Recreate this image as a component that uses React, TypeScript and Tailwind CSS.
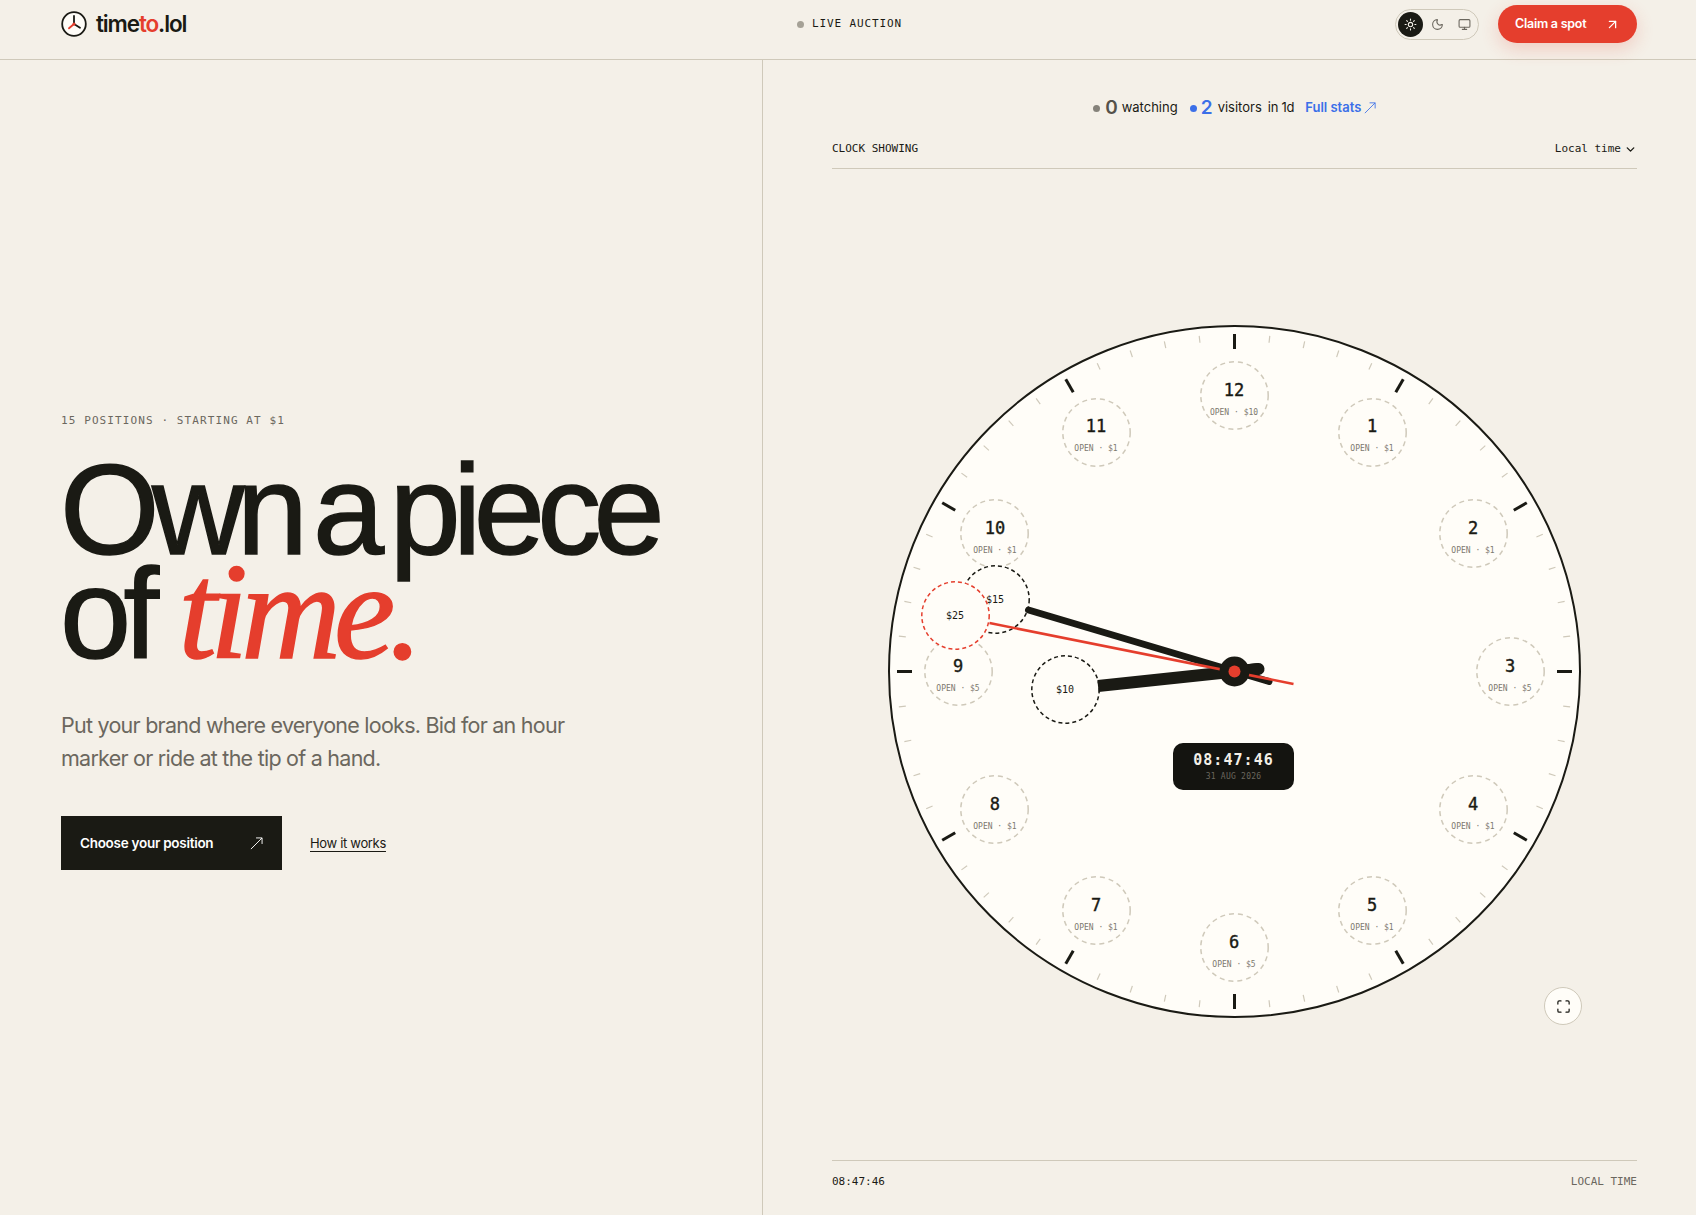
import { ArrowUpRight, ChevronDown, Maximize, Monitor, Moon, Sun } from "lucide-react";

const CENTER = 346.5;
const MONO = "font-['DejaVu_Sans_Mono',monospace]";

const hours = [
    { n: 12, price: "$10" },
    { n: 1, price: "$1" },
    { n: 2, price: "$1" },
    { n: 3, price: "$5" },
    { n: 4, price: "$1" },
    { n: 5, price: "$1" },
    { n: 6, price: "$5" },
    { n: 7, price: "$1" },
    { n: 8, price: "$1" },
    { n: 9, price: "$5" },
    { n: 10, price: "$1" },
    { n: 11, price: "$1" },
];

function polar(deg: number, r: number) {
    const a = ((deg - 90) * Math.PI) / 180;
    return { x: CENTER + r * Math.cos(a), y: CENTER + r * Math.sin(a) };
}

function LongArrow({ className }: { className?: string }) {
    return (
        <svg viewBox="0 0 14 14" fill="none" stroke="currentColor" strokeWidth="1" className={className}>
            <path d="M1 13 13 1M6.5 1H13V7.5" />
        </svg>
    );
}

function Logo() {
    return (
        <svg viewBox="0 0 26 26" className="w-[26px] h-[26px]">
            <circle cx="13" cy="13" r="11.8" fill="#fffdf8" stroke="#1a1a14" strokeWidth="1.8" />
            <path d="M13 13V5M13 13l6 3.8" stroke="#1a1a14" strokeWidth="1.8" strokeLinecap="round" />
            <path d="M13 13l-5 4.3" stroke="#e53e2d" strokeWidth="1.8" strokeLinecap="round" />
            <circle cx="13" cy="13" r="1.6" fill="#e53e2d" />
        </svg>
    );
}

function Header() {
    return (
        <header className="h-[60px] shrink-0 border-b border-[#cfc9ba] pl-[61px] pr-[59px] pb-[11px] flex items-center justify-between relative">
            <div className="flex items-center gap-[9px]">
                <Logo />
                <span className="font-['Inter',sans-serif] text-[22.5px] font-semibold tracking-[-0.05em] text-[#1a1a14]">
                    time<span className="text-[#e53e2d]">to</span>.lol
                </span>
            </div>
            <div className={`absolute left-[797px] top-[16px] flex items-center gap-[8px] ${MONO} text-[11px] tracking-[0.08em] text-[#1a1a14]`}>
                <span className="w-[7px] h-[7px] rounded-full bg-[#a5a196]" />
                LIVE AUCTION
            </div>
            <div className="flex items-center gap-[19px]">
                <div className="w-[84px] h-[31px] rounded-full border border-[#cfc9ba] flex items-center pl-[2px] gap-[2px]">
                    <span className="w-[25px] h-[25px] rounded-full bg-[#1a1a14] text-[#f4f0e8] flex items-center justify-center">
                        <Sun size={13} />
                    </span>
                    <span className="w-[25px] h-[25px] text-[#6b675e] flex items-center justify-center">
                        <Moon size={13} />
                    </span>
                    <span className="w-[25px] h-[25px] text-[#6b675e] flex items-center justify-center">
                        <Monitor size={13} />
                    </span>
                </div>
                <button className="w-[139px] h-[38px] rounded-full bg-[#e53e2d] text-white pl-[17px] pr-[17px] flex items-center justify-between font-['Inter',sans-serif] text-[12.5px] font-semibold tracking-[-0.02em] shadow-[0_6px_18px_rgba(229,62,45,0.2)]">
                    Claim a spot
                    <ArrowUpRight size={15} />
                </button>
            </div>
        </header>
    );
}

function Hero() {
    return (
        <section className="w-[763px] shrink-0 border-r border-[#cfc9ba] pl-[61px] flex flex-col justify-center pt-[8px]">
            <p className={`${MONO} text-[11px] tracking-[0.1em] text-[#6b675e]`}>15 POSITIONS · STARTING AT $1</p>
            <h1 className="mt-[29px] font-['Liberation_Sans',sans-serif] text-[128px] leading-[104px] font-normal tracking-[-0.06em] [word-spacing:-15px] text-[#1a1a14] -ml-[1px] [-webkit-text-stroke:1.5px_#1a1a14]">
                Own a piece
                <br />
                of
                <em className="ml-[27px] font-['Liberation_Serif',serif] italic font-normal text-[138px] leading-[0] text-[#e53e2d] tracking-[-0.05em] [-webkit-text-stroke:1.5px_#e53e2d]">time.</em>
            </h1>
            <p className="mt-[43px] w-[540px] font-['Inter',sans-serif] text-[21.5px] leading-[33px] tracking-[-0.035em] text-[#6b675e]">
                Put your brand where everyone looks. Bid for an hour marker or ride at the tip of a hand.
            </p>
            <div className="mt-[41px] flex items-center gap-[28px]">
                <button className="w-[221px] h-[54px] bg-[#1a1a14] text-white pl-[19px] pr-[19px] flex items-center justify-between font-['Inter',sans-serif] text-[13.5px] font-semibold tracking-[-0.02em]">
                    Choose your position
                    <LongArrow className="w-[13px] h-[13px]" />
                </button>
                <a className="font-['Inter',sans-serif] text-[13px] tracking-[-0.025em] text-[#1a1a14] underline underline-offset-[3px]">How it works</a>
            </div>
        </section>
    );
}

function DashRing({ color, dash }: { color: string; dash: string }) {
    return (
        <svg viewBox="0 0 69 69" className="absolute inset-0 w-full h-full">
            <circle cx="34.5" cy="34.5" r="33.7" fill="none" stroke={color} strokeWidth="1.5" strokeDasharray={dash} />
        </svg>
    );
}

function HourMarker({ n, price }: { n: number; price: string }) {
    const p = polar(n * 30, 276);
    return (
        <div
            className="absolute w-[69px] h-[69px] -ml-[34.5px] -mt-[34.5px] pt-[6px] flex flex-col items-center justify-center"
            style={{ left: p.x, top: p.y }}
        >
            <DashRing color="#cfc9ba" dash="5 4" />
            <span className={`${MONO} text-[17px] leading-[20px] font-medium text-[#1a1a14] [-webkit-text-stroke:0.4px_#1a1a14]`}>{n}</span>
            <span className={`${MONO} mt-[8px] text-[8px] leading-[10px] text-[#7d796f]`}>OPEN · {price}</span>
        </div>
    );
}

function BidMarker({ x, y, price, red }: { x: number; y: number; price: string; red?: boolean }) {
    return (
        <div
            className={`absolute w-[69px] h-[69px] -ml-[34.5px] -mt-[34.5px] rounded-full bg-[#fffdf8] flex items-center justify-center ${MONO} text-[10px] text-[#1a1a14]`}
            style={{ left: x, top: y }}
        >
            <DashRing color={red ? "#e53e2d" : "#1a1a14"} dash="4 3" />
            {price}
        </div>
    );
}

function Dial() {
    const ticks = Array.from({ length: 60 }, (_, i) => i);
    return (
        <div className="relative mr-[1px] w-[693px] h-[693px] rounded-full bg-[#fffdf8] border-2 border-[#1a1a14] box-border">
            <div className="absolute -inset-[2px]">
                <svg viewBox="0 0 693 693" className="absolute inset-0 w-full h-full">
                    {ticks.map((i) => {
                        const major = i % 5 === 0;
                        const a = polar(i * 6, 337.5);
                        const b = polar(i * 6, major ? 322.5 : 330.5);
                        return (
                            <line
                                key={i}
                                x1={a.x}
                                y1={a.y}
                                x2={b.x}
                                y2={b.y}
                                stroke={major ? "#1a1a14" : "#cfc9ba"}
                                strokeWidth={major ? 3 : 1.2}
                            />
                        );
                    })}
                </svg>
                {hours.map((h) => (
                    <HourMarker key={h.n} n={h.n} price={h.price} />
                ))}
                <BidMarker x={107.5} y={274} price="$15" />
                <BidMarker x={67.5} y={290} price="$25" red />
                <BidMarker x={177.5} y={364} price="$10" />
                <svg viewBox="0 0 693 693" className="absolute inset-0 w-full h-full pointer-events-none">
                    <line x1="210" y1="361" x2="370.5" y2="344" stroke="#1a1a14" strokeWidth="12" />
                    <line x1="346" y1="347" x2="370.5" y2="344" stroke="#1a1a14" strokeWidth="12" strokeLinecap="round" />
                    <line x1="140.5" y1="285" x2="381" y2="356.5" stroke="#1a1a14" strokeWidth="7" strokeLinecap="round" />
                    <line x1="101.5" y1="298" x2="405.5" y2="359" stroke="#e53e2d" strokeWidth="2.6" />
                    <circle cx="346.5" cy="346.5" r="15" fill="#1a1a14" />
                    <circle cx="346.5" cy="346.5" r="6" fill="#e53e2d" />
                </svg>
                <div className="absolute left-[285.5px] top-[418px] w-[121px] h-[47px] rounded-[10px] bg-[#141410] flex flex-col items-center justify-center">
                    <span className={`${MONO} text-[15px] leading-[18px] font-bold tracking-[0.07em] text-[#f4f0e8]`}>08:47:46</span>
                    <span className={`${MONO} mt-[3px] text-[8px] leading-[10px] tracking-[0.03em] text-[#6b675e]`}>31 AUG 2026</span>
                </div>
            </div>
        </div>
    );
}

function ClockPanel() {
    return (
        <section className="flex-1 min-w-0 pl-[69px] pr-[59px] flex flex-col">
            <div className="mt-[36px] flex items-center justify-center h-[24px] font-['Inter',sans-serif] text-[13px] text-[#1a1a14]">
                <span className="w-[7px] h-[7px] rounded-full bg-[#85827a]" />
                <span className="ml-[3px] w-[18px] text-center text-[19px] font-semibold text-[#55524b]">0</span>
                <span className="ml-[1px]">watching</span>
                <span className="ml-[12px] w-[7px] h-[7px] rounded-full bg-[#3b6fe8]" />
                <span className="ml-[1px] w-[18px] text-center text-[19px] font-semibold text-[#3b6fe8]">2</span>
                <span className="ml-[2px]">visitors</span>
                <span className="ml-[6px] tracking-[-0.02em]">in 1d</span>
                <span className="ml-[11px] -mt-[1px] font-semibold text-[#3b6fe8]">Full stats</span>
                <LongArrow className="ml-[3px] w-[12px] h-[12px] text-[#3b6fe8]" />
            </div>
            <div className={`mt-[19px] h-[30px] pb-[9px] border-b border-[#cfc9ba] flex items-center justify-between ${MONO} text-[11px] text-[#1a1a14]`}>
                <span>CLOCK SHOWING</span>
                <span className="flex items-center gap-[3px] font-medium">
                    Local time
                    <ChevronDown size={13} strokeWidth={2.5} />
                </span>
            </div>
            <div className="relative flex-1 flex items-center justify-center pt-[14px]">
                <Dial />
                <button className="absolute left-[712px] top-[818px] w-[38px] h-[38px] rounded-full border border-[#cfc9ba] bg-[#fffdf8] flex items-center justify-center text-[#1a1a14]">
                    <Maximize size={15} />
                </button>
            </div>
            <div className={`h-[55px] border-t border-[#cfc9ba] pt-[13px] flex justify-between ${MONO} text-[11px]`}>
                <span className="text-[#1a1a14]">08:47:46</span>
                <span className="text-[#6b675e]">LOCAL TIME</span>
            </div>
        </section>
    );
}

export default function App() {
    return (
        <div className="h-screen bg-[#f4f0e8] flex flex-col overflow-hidden">
            <Header />
            <main className="flex-1 min-h-0 flex">
                <Hero />
                <ClockPanel />
            </main>
        </div>
    );
}
